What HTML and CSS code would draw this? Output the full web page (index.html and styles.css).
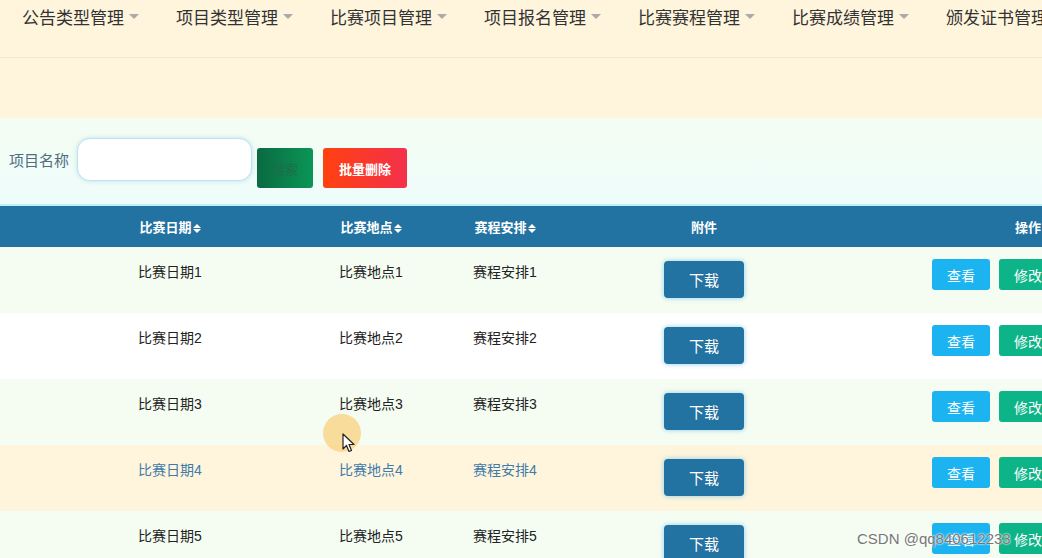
FILE: index.html
```html
<!DOCTYPE html>
<html lang="zh-CN">
<head>
    <meta charset="UTF-8">
    <meta name="viewport" content="width=device-width, initial-scale=1.0">
    <title>比赛赛程管理</title>
    <link rel="stylesheet" href="styles.css">
</head>
<body>
    <div class="nav">
        <div class="nav-item">公告类型管理<span class="caret"></span></div>
        <div class="nav-item">项目类型管理<span class="caret"></span></div>
        <div class="nav-item">比赛项目管理<span class="caret"></span></div>
        <div class="nav-item">项目报名管理<span class="caret"></span></div>
        <div class="nav-item">比赛赛程管理<span class="caret"></span></div>
        <div class="nav-item">比赛成绩管理<span class="caret"></span></div>
        <div class="nav-item">颁发证书管理<span class="caret"></span></div>
    </div>

    <div class="banner"></div>

    <div class="search-bar">
        <label class="search-label">项目名称</label>
        <input class="search-input" type="text">
        <button class="btn-search">搜索</button>
        <button class="btn-delete">批量删除</button>
    </div>

    <table class="data-table">
        <colgroup>
            <col style="width: 60px">
            <col style="width: 220px">
            <col style="width: 182px">
            <col style="width: 86px">
            <col style="width: 312px">
            <col style="width: 336px">
        </colgroup>
        <thead>
            <tr>
                <th></th>
                <th>比赛日期<span class="sort"><i class="up"></i><i class="down"></i></span></th>
                <th>比赛地点<span class="sort"><i class="up"></i><i class="down"></i></span></th>
                <th>赛程安排<span class="sort"><i class="up"></i><i class="down"></i></span></th>
                <th>附件</th>
                <th>操作</th>
            </tr>
        </thead>
        <tbody>
            <tr>
                <td></td>
                <td><span class="cell-text">比赛日期1</span></td>
                <td><span class="cell-text">比赛地点1</span></td>
                <td><span class="cell-text">赛程安排1</span></td>
                <td><button class="btn-download">下载</button></td>
                <td><div class="ops"><button class="btn-view">查看</button><button class="btn-edit">修改</button><button class="btn-del">删除</button></div></td>
            </tr>
            <tr>
                <td></td>
                <td><span class="cell-text">比赛日期2</span></td>
                <td><span class="cell-text">比赛地点2</span></td>
                <td><span class="cell-text">赛程安排2</span></td>
                <td><button class="btn-download">下载</button></td>
                <td><div class="ops"><button class="btn-view">查看</button><button class="btn-edit">修改</button><button class="btn-del">删除</button></div></td>
            </tr>
            <tr>
                <td></td>
                <td><span class="cell-text">比赛日期3</span></td>
                <td><span class="cell-text">比赛地点3</span></td>
                <td><span class="cell-text">赛程安排3</span></td>
                <td><button class="btn-download">下载</button></td>
                <td><div class="ops"><button class="btn-view">查看</button><button class="btn-edit">修改</button><button class="btn-del">删除</button></div></td>
            </tr>
            <tr class="hover">
                <td></td>
                <td><span class="cell-text">比赛日期4</span></td>
                <td><span class="cell-text">比赛地点4</span></td>
                <td><span class="cell-text">赛程安排4</span></td>
                <td><button class="btn-download">下载</button></td>
                <td><div class="ops"><button class="btn-view">查看</button><button class="btn-edit">修改</button><button class="btn-del">删除</button></div></td>
            </tr>
            <tr>
                <td></td>
                <td><span class="cell-text">比赛日期5</span></td>
                <td><span class="cell-text">比赛地点5</span></td>
                <td><span class="cell-text">赛程安排5</span></td>
                <td><button class="btn-download">下载</button></td>
                <td><div class="ops"><button class="btn-view">查看</button><button class="btn-edit">修改</button><button class="btn-del">删除</button></div></td>
            </tr>
        </tbody>
    </table>

    <!-- 鼠标指针 -->
    <div class="pointer">
        <svg width="14" height="20" viewBox="0 0 14 20">
            <path d="M1 1 L1 16 L4.5 12.5 L7 18.5 L9.5 17.5 L7 11.5 L12 11.5 Z" fill="#fff" stroke="#222" stroke-width="1.2" stroke-linejoin="round"/>
        </svg>
    </div>

    <div class="watermark">CSDN @qq840612233</div>
</body>
</html>
```

FILE: styles.css
```css
html, body {
    margin: 0;
    padding: 0;
    overflow: hidden;
}
body {
    font-family: "Liberation Sans", "Noto Sans CJK SC", sans-serif;
    background: #f5fdf4;
    color: #333;
    width: 1042px;
    height: 558px;
    position: relative;
}
.nav {
    display: flex;
    height: 57px;
    padding-left: 3px;
    background: #fff5dc;
    border-bottom: 1px solid #f3e6cc;
    box-shadow: 0 1px 2px rgba(200, 170, 120, 0.15);
    white-space: nowrap;
}
.nav-item {
    flex: none;
    display: flex;
    align-items: center;
    height: 33px;
    padding: 0 18px 0 19px;
    font-size: 17px;
    color: #333;
}
.caret {
    display: inline-block;
    margin-left: 5px;
    width: 0;
    height: 0;
    border-left: 5px solid transparent;
    border-right: 5px solid transparent;
    border-top: 5px solid #aaa;
}
.banner {
    height: 60px;
    background: #fff5dc;
}
.search-bar {
    display: flex;
    align-items: center;
    height: 86px;
    padding-left: 9px;
    background: linear-gradient(#f4fdf2, #eefcfb);
}
.search-label {
    font-size: 15px;
    color: #4f6c80;
    margin-right: 8px;
    margin-top: -4px;
}
.search-input {
    width: 175px;
    height: 43px;
    box-sizing: border-box;
    border: 1px solid #bfe2f2;
    border-radius: 13px;
    background: #fff;
    box-shadow: 0 0 4px rgba(140, 200, 230, 0.5);
    margin-top: -4px;
    outline: none;
}
.search-bar button {
    height: 40px;
    border: none;
    border-radius: 3px;
    font-family: "Liberation Sans", "Noto Sans CJK SC", sans-serif;
    font-size: 13px;
    margin-top: 14px;
}
.btn-search {
    width: 56px;
    margin-left: 5px;
    background: linear-gradient(90deg, #0a6a42, #0b9656);
    color: #1c6e4a;
}
.btn-delete {
    width: 84px;
    margin-left: 10px;
    background: linear-gradient(90deg, #ff4110, #f4304c);
    color: #fff;
    font-weight: bold;
}
.data-table {
    width: 1196px;
    table-layout: fixed;
    border-collapse: collapse;
    border-top: 2px solid #bdeff5;
}
.data-table th {
    height: 41px;
    padding: 0;
    background: #2272a2;
    color: #fff;
    font-size: 13px;
    font-weight: bold;
    text-align: center;
    white-space: nowrap;
}
.sort {
    display: inline-flex;
    flex-direction: column;
    gap: 1px;
    margin-left: 1px;
    vertical-align: middle;
}
.sort i {
    display: block;
    width: 0;
    height: 0;
    border-left: 4px solid transparent;
    border-right: 4px solid transparent;
}
.sort .up {
    border-bottom: 4px solid #fff;
}
.sort .down {
    border-top: 4px solid #fff;
}
.data-table td {
    height: 66px;
    padding: 0;
    text-align: center;
    vertical-align: top;
    white-space: nowrap;
}
.data-table tbody tr:nth-child(odd) {
    background: #f5fdf2;
}
.data-table tbody tr:nth-child(even) {
    background: #fff;
}
.data-table tbody tr.hover {
    background: #fff5dc;
}
.cell-text {
    display: block;
    margin-top: 15px;
    line-height: 20px;
    font-size: 14px;
    color: #222;
}
.hover .cell-text {
    color: #3d7bab;
}
.btn-download {
    margin-top: 14px;
    width: 80px;
    height: 37px;
    border: none;
    border-radius: 4px;
    background: #2272a2;
    color: #fff;
    font-family: "Liberation Sans", "Noto Sans CJK SC", sans-serif;
    font-size: 15px;
    box-shadow: 0 0 4px 1px rgba(120, 200, 235, 0.6);
}
.ops {
    display: flex;
    justify-content: center;
    gap: 9px;
    margin-top: 12px;
}
.ops button {
    width: 58px;
    height: 31px;
    border: none;
    border-radius: 3px;
    color: #fff;
    font-family: "Liberation Sans", "Noto Sans CJK SC", sans-serif;
    font-size: 14px;
}
.btn-view {
    background: #1cb4f0;
}
.btn-edit {
    background: #0cb488;
}
.btn-del {
    background: #f04848;
}
.pointer {
    position: absolute;
    left: 323px;
    top: 414px;
    width: 38px;
    height: 38px;
    border-radius: 50%;
    background: rgba(250, 205, 120, 0.7);
}
.pointer svg {
    position: absolute;
    left: 19px;
    top: 19px;
}
.watermark {
    position: absolute;
    left: 857px;
    top: 530px;
    font-size: 15px;
    color: #777;
    text-shadow: 0 0 2px #fff, 0 0 2px #fff;
    white-space: nowrap;
}
```
